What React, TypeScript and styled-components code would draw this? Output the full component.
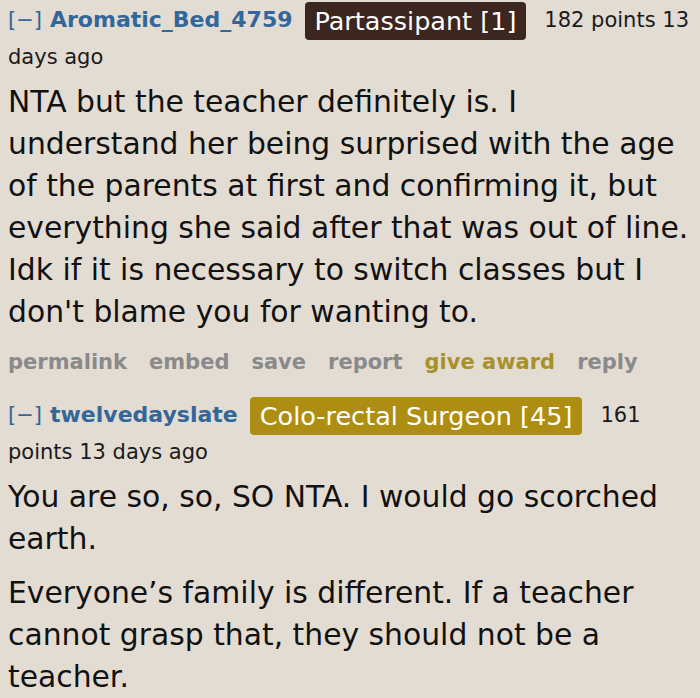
import React from "react";
import styled, { createGlobalStyle } from "styled-components";

const Global = createGlobalStyle`
  html, body { margin: 0; padding: 0; background: #e3dcd2; }
  body { font-family: "DejaVu Sans", Verdana, sans-serif; }
`;

const Page = styled.div`
  padding: 2px 6px 0 8px;
  width: 686px;
  overflow: hidden;
  height: 696px;
`;

const Comment = styled.div`
  display: flex;
  flex-direction: column;
`;

const Tagline = styled.div`
  font-size: 21px;
  line-height: 34px;
  color: #222;
`;

const Expand = styled.span`
  display: inline-block;
  color: #336699;
  font-weight: normal;
  font-size: 21px;
  margin-right: 8px;
`;

const Author = styled.span`
  color: #336699;
  font-weight: bold;
  font-size: 22px;
  margin-right: 12px;
`;

const Flair = styled.span<{ $bg: string }>`
  display: inline-block;
  background: ${(p) => p.$bg};
  color: #fff;
  font-size: 25.5px;
  line-height: 38px;
  padding: 0 10px;
  border-radius: 4px;
  margin-right: 18px;
  vertical-align: middle;
`;

const Score = styled.span`
  color: #1a1a1a;
`;

const Body = styled.div`
  font-size: 29.8px;
  line-height: 42px;
  color: #111;
  margin-top: 7px;
  p {
    margin: 0 0 12px 0;
  }
`;

const Buttons = styled.div`
  display: flex;
  gap: 22px;
  font-size: 21px;
  line-height: 30px;
  font-weight: bold;
  margin-top: 2px;
  margin-bottom: 20px;
`;

const Btn = styled.span<{ $gold?: boolean }>`
  color: ${(p) => (p.$gold ? "#a89128" : "#8a8a8a")};
`;

export default function App() {
  return (
    <>
      <Global />
      <Page>
        <Comment>
          <Tagline>
            <Expand>[−]</Expand>
            <Author>Aromatic_Bed_4759</Author>
            <Flair $bg="#3c2620">Partassipant [1]</Flair>
            <Score>182 points 13 days ago</Score>
          </Tagline>
          <Body>
            <p>
              NTA but the teacher definitely is. I understand her being surprised with the age of the
              parents at first and confirming it, but everything she said after that was out of line.
              Idk if it is necessary to switch classes but I don't blame you for wanting to.
            </p>
          </Body>
          <Buttons>
            <Btn>permalink</Btn>
            <Btn>embed</Btn>
            <Btn>save</Btn>
            <Btn>report</Btn>
            <Btn $gold>give award</Btn>
            <Btn>reply</Btn>
          </Buttons>
        </Comment>
        <Comment>
          <Tagline>
            <Expand>[−]</Expand>
            <Author>twelvedayslate</Author>
            <Flair $bg="#ae8e12">Colo-rectal Surgeon [45]</Flair>
            <Score>161 points 13 days ago</Score>
          </Tagline>
          <Body>
            <p>You are so, so, SO NTA. I would go scorched earth.</p>
            <p>
              Everyone’s family is different. If a teacher cannot grasp that, they should not be a
              teacher.
            </p>
          </Body>
        </Comment>
      </Page>
    </>
  );
}
